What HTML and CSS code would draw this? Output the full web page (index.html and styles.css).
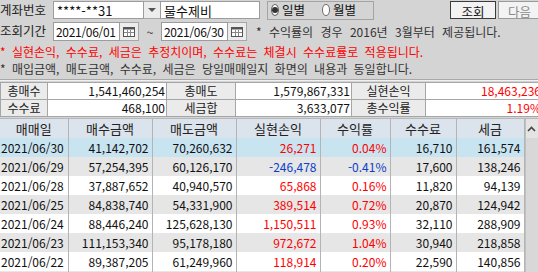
FILE: index.html
```html
<!DOCTYPE html>
<html lang="ko">
<head>
  <meta charset="UTF-8" />
  <title>매매일지</title>
  <link rel="stylesheet" href="styles.css">
</head>
<body>
  <div class="bar bar-first">
    <span class="lbl">계좌번호</span>
    <div class="field acct">****-**31</div>
    <div class="combo-btn"><span class="tri"></span></div>
    <div class="field name">물수제비</div>
    <div class="radio-group">
      <span class="radio on"></span><span class="radio-txt">일별</span>
      <span class="radio"></span><span class="radio-txt">월별</span>
    </div>
    <div class="spacer"></div>
    <button class="btn">조회</button>
    <button class="btn disabled">다음</button>
  </div>

  <div class="bar bar-second">
    <span class="lbl">조회기간</span>
    <div class="field date">2021/06/01</div>
    <div class="cal-btn">
      <svg width="12" height="10" viewBox="0 0 12 10"><rect x="0.5" y="0.5" width="11" height="9" fill="#fff" stroke="#555"/><rect x="0.5" y="0.5" width="11" height="2" fill="#555"/><path d="M4.5 3v6M7.5 3v6M1 5.5h10" stroke="#888"/></svg>
    </div>
    <span class="tilde">~</span>
    <div class="field date">2021/06/30</div>
    <div class="cal-btn">
      <svg width="12" height="10" viewBox="0 0 12 10"><rect x="0.5" y="0.5" width="11" height="9" fill="#fff" stroke="#555"/><rect x="0.5" y="0.5" width="11" height="2" fill="#555"/><path d="M4.5 3v6M7.5 3v6M1 5.5h10" stroke="#888"/></svg>
    </div>
    <span class="note">* 수익률의 경우 2016년 3월부터 제공됩니다.</span>
  </div>

  <p class="msg red">* 실현손익, 수수료, 세금은 추정치이며, 수수료는 체결시 수수료률로 적용됩니다.</p>
  <p class="msg">* 매입금액, 매도금액, 수수료, 세금은 당일매매일지 화면의 내용과 동일합니다.</p>

  <div class="sep"></div>

  <!-- 합계 -->
  <table class="summary">
    <colgroup>
      <col style="width:47px"><col style="width:119px"><col style="width:69px">
      <col style="width:116px"><col style="width:74px"><col style="width:117px">
    </colgroup>
    <tr>
      <th>총매수</th><td>1,541,460,254</td>
      <th>총매도</th><td>1,579,867,331</td>
      <th>실현손익</th><td class="red">18,463,236</td>
    </tr>
    <tr>
      <th>수수료</th><td>468,100</td>
      <th>세금합</th><td>3,633,077</td>
      <th>총수익률</th><td class="red">1.19%</td>
    </tr>
  </table>

  <!-- 일별 목록 -->
  <div class="grid-wrap">
    <table class="grid">
      <colgroup>
        <col style="width:68px"><col style="width:84px"><col style="width:84px"><col style="width:84px">
        <col style="width:70px"><col style="width:66px"><col style="width:68px">
      </colgroup>
      <thead>
        <tr><th>매매일</th><th>매수금액</th><th>매도금액</th><th>실현손익</th><th>수익률</th><th>수수료</th><th>세금</th></tr>
      </thead>
      <tbody>
        <tr class="sel"><td>2021/06/30</td><td>41,142,702</td><td>70,260,632</td><td class="red">26,271</td><td class="red">0.04%</td><td>16,710</td><td>161,574</td></tr>
        <tr class="alt"><td>2021/06/29</td><td>57,254,395</td><td>60,126,170</td><td class="blue">-246,478</td><td class="blue">-0.41%</td><td>17,600</td><td>138,246</td></tr>
        <tr><td>2021/06/28</td><td>37,887,652</td><td>40,940,570</td><td class="red">65,868</td><td class="red">0.16%</td><td>11,820</td><td>94,139</td></tr>
        <tr class="alt"><td>2021/06/25</td><td>84,838,740</td><td>54,331,900</td><td class="red">389,514</td><td class="red">0.72%</td><td>20,870</td><td>124,942</td></tr>
        <tr><td>2021/06/24</td><td>88,446,240</td><td>125,628,130</td><td class="red">1,150,511</td><td class="red">0.93%</td><td>32,110</td><td>288,909</td></tr>
        <tr class="alt"><td>2021/06/23</td><td>111,153,340</td><td>95,178,180</td><td class="red">972,672</td><td class="red">1.04%</td><td>30,940</td><td>218,858</td></tr>
        <tr><td>2021/06/22</td><td>89,387,205</td><td>61,249,960</td><td class="red">118,914</td><td class="red">0.20%</td><td>22,590</td><td>140,856</td></tr>
        <tr class="alt"><td class="empty"></td><td></td><td></td><td></td><td></td><td></td><td></td></tr>
      </tbody>
    </table>
    <div class="scroll">
      <div class="scroll-up">
        <svg width="9" height="6" viewBox="0 0 9 6"><path d="M1 5l3.5-3.5L8 5" fill="none" stroke="#444" stroke-width="1.6"/></svg>
      </div>
    </div>
  </div>
</body>
</html>
```

FILE: styles.css
```css
body {
  margin: 0;
  width: 538px;
  height: 272px;
  overflow: hidden;
  background: #d4d4d4;
  font-family: "Noto Sans CJK KR", sans-serif;
  font-size: 12px;
  line-height: 1;
  color: #111;
}

.bar {
  display: flex;
  align-items: center;
  white-space: nowrap;
}

.bar-first {
  height: 18px;
  padding-top: 1px;
}

.bar-second {
  height: 19px;
  margin-top: 3px;
}

.lbl {
  width: 53px;
  font-size: 12.5px;
  color: #222;
}

.field {
  box-sizing: border-box;
  height: 100%;
  background: #fff;
  border: 1px solid #9c9c9c;
  padding: 0 3px;
  display: flex;
  align-items: center;
  font-size: 13px;
  overflow: hidden;
}

.acct { width: 91px; }
.name { width: 100px; }
.date {
  width: 67px;
  padding: 0 1px 0 2px;
  font-size: 12px;
  letter-spacing: -0.3px;
}

.combo-btn,
.cal-btn {
  box-sizing: border-box;
  height: 100%;
  background: #ececec;
  border: 1px solid #a8a8a8;
  display: flex;
  align-items: center;
  justify-content: center;
}

.combo-btn { width: 16px; border-left: none; border-right: none; }
.cal-btn { width: 19px; border-left: none; }

.tri {
  width: 0;
  height: 0;
  border-left: 4px solid transparent;
  border-right: 4px solid transparent;
  border-top: 4px solid #555;
}

.radio-group {
  box-sizing: border-box;
  margin-left: 7px;
  width: 107px;
  height: 19px;
  border: 1px solid #a4a4a4;
  display: flex;
  align-items: center;
  padding-left: 3px;
  font-size: 12.5px;
}

.radio {
  box-sizing: border-box;
  width: 12px;
  height: 12px;
  border-radius: 50%;
  border: 1px solid #666;
  background: #fff;
  display: flex;
  align-items: center;
  justify-content: center;
}

.radio.on::after {
  content: "";
  width: 6px;
  height: 6px;
  border-radius: 50%;
  background: #333;
}

.radio-txt {
  margin: 0 17px 0 3px;
}

.spacer { flex: 1; }

.btn {
  box-sizing: border-box;
  height: 18px;
  width: 46px;
  padding: 0;
  background: #f3f3f3;
  border: 1px solid #3c3c3c;
  font-family: inherit;
  font-size: 12.5px;
  color: #111;
}

.btn.disabled {
  width: 43px;
  margin-left: 2px;
  margin-right: -3px;
  border-color: #9a9a9a;
  color: #8a8a8a;
}

.tilde {
  width: 22px;
  text-align: center;
  font-size: 12px;
  color: #333;
}

.note {
  margin-left: 9px;
  color: #333;
  word-spacing: 4px;
}

.msg {
  margin: 0;
  height: 17px;
  line-height: 17px;
  white-space: nowrap;
  color: #333;
  word-spacing: 3px;
}

.msg.red {
  margin-top: 2px;
}

.red { color: #f00 !important; }
.blue { color: #0a3fc8 !important; }

.sep {
  margin-top: 2px;
  height: 1px;
  background: #a8a8a8;
  border-bottom: 1px solid #f0f0f0;
}

.summary {
  margin-top: 1px;
  width: 542px;
  table-layout: fixed;
  border-collapse: collapse;
}

.summary th,
.summary td {
  height: 16px;
  line-height: 14px;
  padding: 0 1px;
  border: 1px solid #a6a6a6;
  font-size: 12px;
  font-weight: normal;
  white-space: nowrap;
  overflow: hidden;
}

.summary th {
  background: #ebebeb;
  text-align: center;
  color: #222;
}

.summary td {
  background: #fff;
  text-align: right;
  color: #111;
}

.grid-wrap {
  margin-top: 1px;
  display: flex;
  border-top: 1px solid #b8b8b8;
}

.grid {
  width: 524px;
  table-layout: fixed;
  border-collapse: collapse;
  background: #fff;
}

.grid th {
  height: 19px;
  line-height: 17px;
  padding: 0;
  background: #dbe3ec;
  font-weight: normal;
  font-size: 13px;
  color: #222;
  border-right: 1px solid #b4b4b4;
}

.grid td {
  height: 19px;
  line-height: 16px;
  padding: 0 3px 0 0;
  text-align: right;
  white-space: nowrap;
  border-right: 1px solid #b4b4b4;
  color: #111;
}

.grid td:first-child {
  text-align: left;
  padding: 0 0 0 1px;
}

.grid tr.alt td { background: #e6e6e6; }
.grid tr.sel td { background: #c8e4f1; }

.scroll {
  width: 14px;
  background: #d8d8d8;
  border-left: 1px solid #c0c0c0;
}

.scroll-up {
  height: 19px;
  background: #e4e4e4;
  display: flex;
  align-items: center;
  justify-content: center;
}
```
